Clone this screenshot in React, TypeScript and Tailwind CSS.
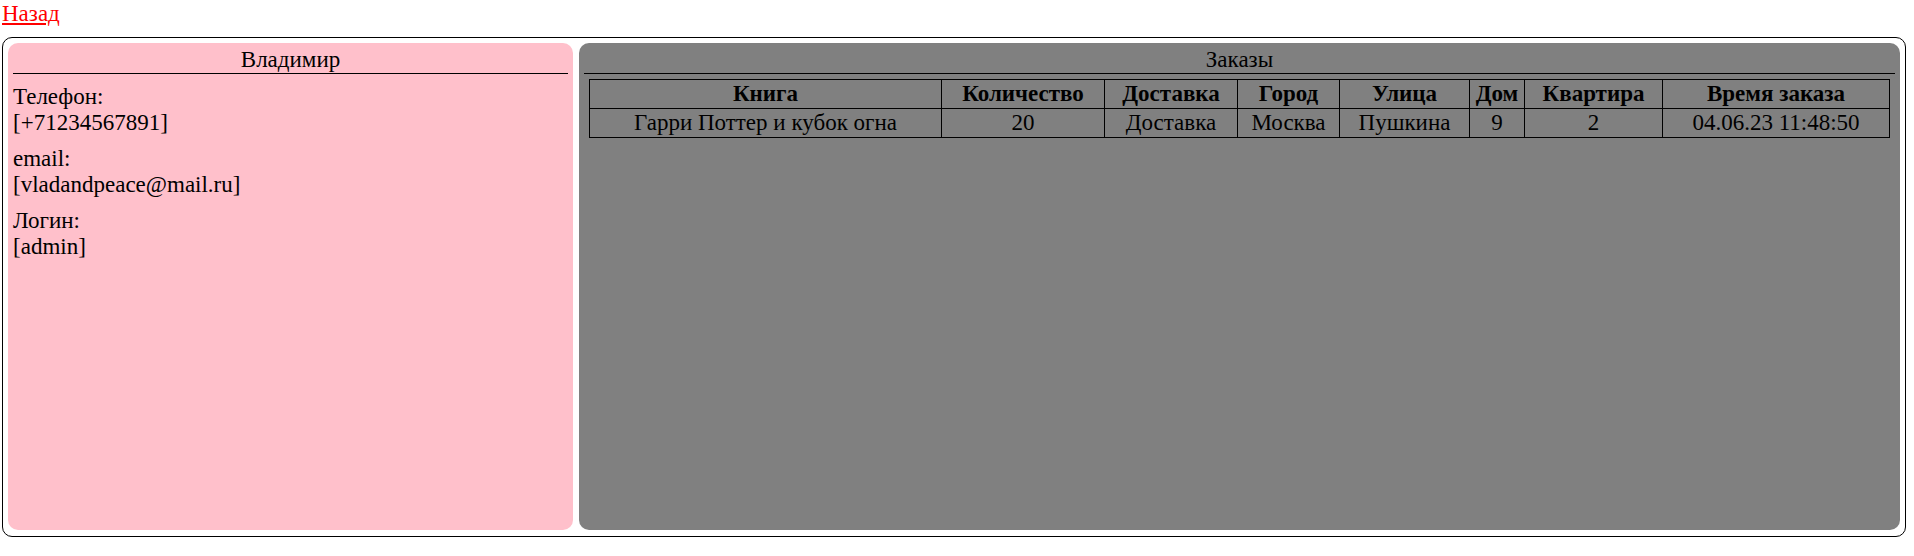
import React from 'react'

// Профиль пользователя: контакты слева, заказы справа
const user = {
  name: 'Владимир',
  phone: '+71234567891',
  email: 'vladandpeace@mail.ru',
  login: 'admin',
}

const columns = [
  { title: 'Книга', w: 'w-[352px]' },
  { title: 'Количество', w: 'w-[163px]' },
  { title: 'Доставка', w: 'w-[133px]' },
  { title: 'Город', w: 'w-[102px]' },
  { title: 'Улица', w: 'w-[130px]' },
  { title: 'Дом', w: 'w-[55px]' },
  { title: 'Квартира', w: 'w-[138px]' },
  { title: 'Время заказа', w: 'w-[227px]' },
]

const orders = [
  ['Гарри Поттер и кубок огна', '20', 'Доставка', 'Москва', 'Пушкина', '9', '2', '04.06.23 11:48:50'],
]

function InfoBlock({ label, value }: { label: string; value: string }) {
  return (
    <div className="mt-[10px]">
      <div>{label}</div>
      <div>[{value}]</div>
    </div>
  )
}

export default function App() {
  return (
    <div className="min-h-screen bg-white px-[2px] pt-[1px] font-['Liberation_Serif','Times_New_Roman',serif] text-[23px] leading-[normal] text-black">
      <a href="#" className="text-[#ff0000] underline">Назад</a>

      <div className="mt-[10px] flex h-[500px] w-[1904px] gap-[6px] rounded-[10px] border border-black px-[5px] pt-[5px] pb-[6px]">
        {/* Contacts */}
        <div className="w-[565px] shrink-0 rounded-[10px] bg-[#ffc0cb] px-[5px] pt-[4px]">
          <div className="border-b border-black text-center">{user.name}</div>
          <InfoBlock label="Телефон:" value={user.phone} />
          <InfoBlock label="email:" value={user.email} />
          <InfoBlock label="Логин:" value={user.login} />
        </div>

        {/* Orders */}
        <div className="flex-1 rounded-[10px] bg-[#808080] px-[5px] pt-[4px]">
          <div className="border-b border-black text-center">Заказы</div>
          <table className="mt-[5px] ml-[5px] w-[1300px] table-fixed border-collapse border border-black">
            <thead>
              <tr>
                {columns.map(c => (
                  <th key={c.title} className={`${c.w} border border-black p-[1px] text-center font-bold`}>
                    {c.title}
                  </th>
                ))}
              </tr>
            </thead>
            <tbody>
              {orders.map((row, i) => (
                <tr key={i}>
                  {row.map((cell, j) => (
                    <td key={j} className="border border-black p-[1px] text-center">
                      {cell}
                    </td>
                  ))}
                </tr>
              ))}
            </tbody>
          </table>
        </div>
      </div>
    </div>
  )
}
